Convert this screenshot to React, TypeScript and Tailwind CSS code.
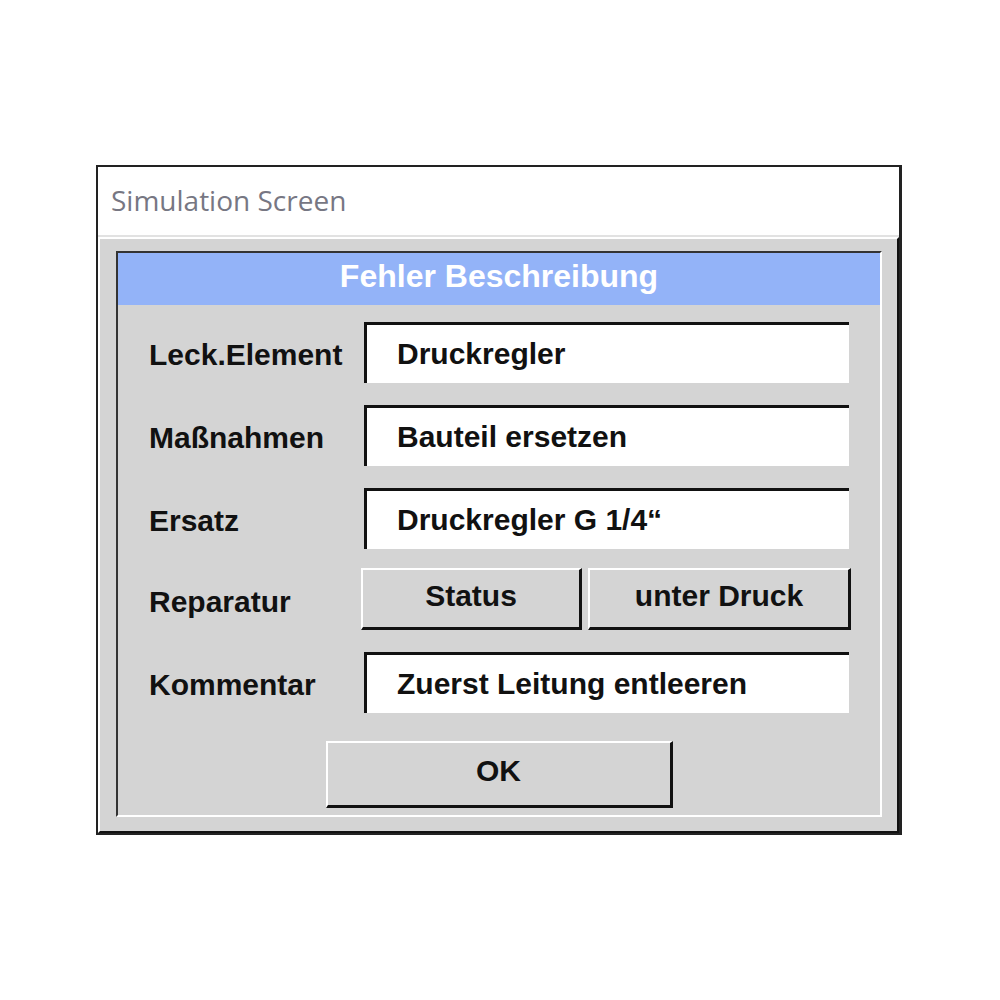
import React from "react";

function Row({ label, value, className }: { label: string; value: string; className: string }) {
  return (
    <div className={`flex items-center ${className}`}>
      <div className="w-[215px] pt-[5px] text-[30px] font-bold text-[#111] leading-none">{label}</div>
      <div className="w-[485px] h-[61px] bg-white border-t-[3px] border-l-[3px] border-t-[#111] border-l-[#111] pl-[30px] pb-[1px] flex items-center text-[30px] font-bold text-[#111] leading-none">
        {value}
      </div>
    </div>
  );
}

export default function App() {
  return (
    <div className="w-[1000px] h-[1000px] bg-white pt-[165px] pl-[96px] font-['Liberation_Sans',Arial,sans-serif]">
      <div className="w-[806px] h-[670px] border-2 border-[#222] border-r-[3px] flex flex-col bg-white">
        <div className="h-[68px] shrink-0 pl-[13px] pb-[3px] flex items-center text-[28px] text-[#777783] font-['Open_Sans',sans-serif] leading-none">
          Simulation Screen
        </div>
        <div className="h-[2px] shrink-0 bg-[#e2e2e2]" />
        <div className="flex-1 bg-[#d4d4d4] border-t-2 border-l-2 border-t-white border-l-white border-r-2 border-b-2 border-r-[#111] border-b-[#111] pl-[16px] pt-[12px]">
          <div className="w-[766px] h-[566px] border-t-2 border-l-2 border-t-[#333] border-l-[#333] border-r-2 border-b-2 border-r-white border-b-white flex flex-col">
            <div className="h-[52px] shrink-0 bg-[#93b3f8] pb-[6px] flex items-center justify-center text-[32px] font-bold text-white leading-none">
              Fehler Beschreibung
            </div>
            <div className="pl-[31px] flex flex-col">
              <Row className="mt-[17px]" label="Leck.Element" value="Druckregler" />
              <Row className="mt-[22px]" label="Maßnahmen" value="Bauteil ersetzen" />
              <Row className="mt-[22px]" label="Ersatz" value="Druckregler G 1/4“" />
              <div className="flex items-center mt-[19px]">
                <div className="w-[212px] pt-[5px] text-[30px] font-bold text-[#111] leading-none">Reparatur</div>
                <div className="w-[221px] h-[62px] bg-[#d4d4d4] border-t-2 border-l-2 border-t-white border-l-white border-r-[3px] border-b-[3px] border-r-[#111] border-b-[#111] pb-[5px] flex items-center justify-center text-[30px] font-bold text-[#111] leading-none">
                  Status
                </div>
                <div className="ml-[6px] w-[263px] h-[62px] bg-[#d4d4d4] border-t-2 border-l-2 border-t-white border-l-white border-r-[3px] border-b-[3px] border-r-[#111] border-b-[#111] pb-[5px] flex items-center justify-center text-[30px] font-bold text-[#111] leading-none">
                  unter Druck
                </div>
              </div>
              <Row className="mt-[22px]" label="Kommentar" value="Zuerst Leitung entleeren" />
            </div>
            <div className="mt-[28px] flex justify-center">
              <div className="w-[347px] h-[67px] bg-[#d4d4d4] border-t-2 border-l-2 border-t-white border-l-white border-r-[3px] border-b-[3px] border-r-[#111] border-b-[#111] pb-[6px] flex items-center justify-center text-[30px] font-bold text-[#111] leading-none">
                OK
              </div>
            </div>
          </div>
        </div>
      </div>
    </div>
  );
}
